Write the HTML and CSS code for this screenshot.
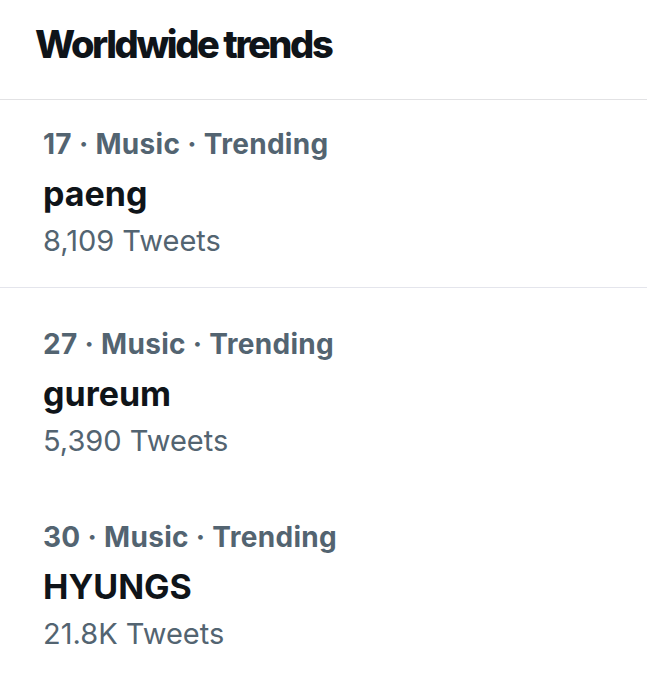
FILE: index.html
```html
<!DOCTYPE html>
<html lang="en">
<head>
<meta charset="utf-8">
<title>Worldwide trends</title>
<link rel="stylesheet" href="styles.css">
</head>
<body>
<main class="panel">
  <header class="panel-header">
    <h1 class="panel-title">Worldwide trends</h1>
  </header>
  <ul class="trend-list">
    <li class="trend trend--first">
      <div class="trend-meta">17 · Music · Trending</div>
      <div class="trend-name">paeng</div>
      <div class="trend-count">8,109 Tweets</div>
    </li>
    <li class="trend">
      <div class="trend-meta">27 · Music · Trending</div>
      <div class="trend-name">gureum</div>
      <div class="trend-count">5,390 Tweets</div>
    </li>
    <li class="trend trend--last">
      <div class="trend-meta">30 · Music · Trending</div>
      <div class="trend-name">HYUNGS</div>
      <div class="trend-count">21.8K Tweets</div>
    </li>
  </ul>
</main>
</body>
</html>
```

FILE: styles.css
```css
html, body {
  margin: 0;
  padding: 0;
  background: #ffffff;
}

body {
  font-family: "Inter", "Liberation Sans", Arial, sans-serif;
  color: #0f1419;
}

.panel {
  width: 647px;
  height: 683px;
  overflow: hidden;
}

.panel-header {
  padding: 20px 35px 31px;
  border-bottom: 1px solid #e2e2e4;
}

.panel-title {
  margin: 0;
  font-size: 38px;
  line-height: 48px;
  font-weight: 800;
  letter-spacing: -2.4px;
  color: #0f1419;
}

.trend-list {
  list-style: none;
  margin: 0;
  padding: 0;
}

.trend {
  padding: 36px 43px 26px;
}

.trend--first {
  padding-top: 24px;
  border-bottom: 1px solid #e4e5ec;
}

.trend--last {
  padding-top: 30px;
}

.trend-meta {
  font-size: 28px;
  line-height: 40px;
  font-weight: 700;
  letter-spacing: 0.3px;
  color: #536471;
}

.trend-name {
  margin-top: 8px;
  font-size: 34px;
  line-height: 44px;
  font-weight: 700;
  color: #0f1419;
}

.trend-count {
  margin-top: 5px;
  font-size: 29px;
  line-height: 40px;
  font-weight: 400;
  color: #536471;
}
```
